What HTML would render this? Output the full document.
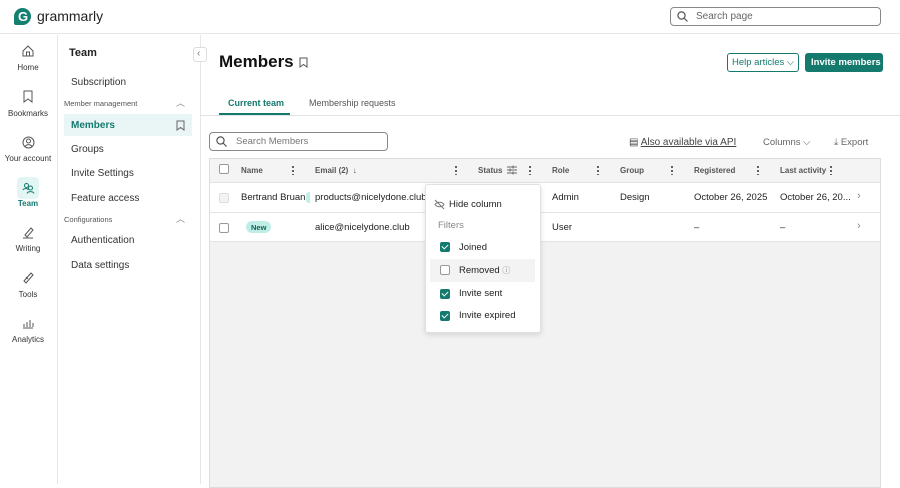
<!DOCTYPE html><html><head><style>
*{box-sizing:border-box;margin:0;padding:0}
body{width:900px;height:484px;overflow:hidden;font-family:"Liberation Sans",sans-serif;background:#fff;color:#222;position:relative}
.a{position:absolute}
.t{position:absolute;white-space:nowrap}
.nav .t{font-size:8px;color:#333;transform:translateX(-50%)}
.sb{font-size:10px;color:#333}
.h{font-size:8px;color:#555;font-weight:bold}
.cb{position:absolute;width:10px;height:10px;border:1px solid #999;border-radius:2px;background:#fff}
.ck{position:absolute;width:10px;height:10px;border-radius:2px;background:#157a6e}
.ck:after{content:"";position:absolute;left:3px;top:1px;width:3px;height:5px;border:solid #fff;border-width:0 1.5px 1.5px 0;transform:rotate(45deg)}
.dots{position:absolute;width:2px;height:10px;background:radial-gradient(circle,#555 1px,transparent 1.2px) 0 0/2px 4px repeat-y}
</style></head><body>
<div class="a" style="left:0;top:0;width:900px;height:34px;border-bottom:1px solid #e6e6e6"></div>
<div class="a" style="left:14px;top:8px;width:17px;height:17px;background:#15806f;border-radius:50% 50% 50% 2px"></div>
<div class="t" style="left:18px;top:9px;color:#fff;font-weight:bold;font-size:13px">G</div>
<div class="t" style="left:37px;top:8px;font-size:14px;color:#222">grammarly</div>
<div class="a" style="left:670px;top:7px;width:211px;height:19px;border:1px solid #888;border-radius:4px"></div>
<svg class="a" style="left:677px;top:11px" width="11" height="11"><circle cx="4.5" cy="4.5" r="3.6" fill="none" stroke="#555" stroke-width="1.2"/><path d="M7 7l3.5 3.5" stroke="#555" stroke-width="1.2"/></svg>
<div class="t" style="left:696px;top:11px;font-size:10px;color:#666">Search page</div>
<div class="a" style="left:57px;top:35px;width:1px;height:449px;background:#e6e6e6"></div>
<div class="nav">
<svg class="a" style="left:22px;top:45px" width="12" height="12"><path d="M1 6L6 1l5 5v5H1z M4.5 11V7h3v4" fill="none" stroke="#555"/></svg>
<div class="t" style="left:28px;top:63px">Home</div>
<svg class="a" style="left:23px;top:90px" width="10" height="13"><path d="M1 1h8v11L5 9 1 12z" fill="none" stroke="#555"/></svg>
<div class="t" style="left:28px;top:109px">Bookmarks</div>
<svg class="a" style="left:22px;top:136px" width="13" height="13"><circle cx="6.5" cy="6.5" r="5.5" fill="none" stroke="#555"/><circle cx="6.5" cy="5" r="2" fill="none" stroke="#555"/><path d="M3 10.5c2-2.5 5-2.5 7 0" fill="none" stroke="#555"/></svg>
<div class="t" style="left:28px;top:154px">Your account</div>
<div class="a" style="left:17px;top:177px;width:22px;height:22px;background:#e3f6f3;border-radius:4px"></div>
<svg class="a" style="left:22px;top:182px" width="13" height="12"><circle cx="4.5" cy="3.5" r="2" fill="none" stroke="#157a6e"/><circle cx="8.5" cy="6" r="2" fill="none" stroke="#157a6e"/><path d="M1 8c1-2 5-2 5 0M5 11.5c1-2.5 6-2.5 7 0" fill="none" stroke="#157a6e"/></svg>
<div class="t" style="left:28px;top:199px;color:#157a6e;font-weight:bold">Team</div>
<svg class="a" style="left:22px;top:226px" width="12" height="13"><path d="M3 9l6-7 2 2-6 7zM1 12h10" fill="none" stroke="#555"/></svg>
<div class="t" style="left:28px;top:244px">Writing</div>
<svg class="a" style="left:22px;top:271px" width="12" height="13"><path d="M2 10l7-8 2 2-7 8zM4 6l2 2" fill="none" stroke="#555"/></svg>
<div class="t" style="left:28px;top:290px">Tools</div>
<svg class="a" style="left:22px;top:317px" width="12" height="12"><path d="M1 11h10M2 10V7M5 10V5M8 10V3M11 10V6" fill="none" stroke="#555"/></svg>
<div class="t" style="left:28px;top:335px">Analytics</div>
</div>
<div class="a" style="left:200px;top:35px;width:1px;height:449px;background:#e6e6e6"></div>
<div class="a" style="left:193px;top:47px;width:14px;height:15px;border:1px solid #ddd;border-radius:3px;background:#fff"></div>
<div class="t" style="left:197px;top:48px;font-size:10px;color:#777">‹</div>
<div class="t" style="left:69px;top:47px;font-size:11px;font-weight:bold">Team</div>
<div class="t sb" style="left:71px;top:77px">Subscription</div>
<div class="t" style="left:64px;top:99px;font-size:7.5px;color:#555">Member management</div>
<div class="t" style="left:176px;top:96px;font-size:9px;color:#888">︿</div>
<div class="a" style="left:64px;top:114px;width:128px;height:22px;background:#e9f6f5"></div>
<div class="t sb" style="left:71px;top:120px;color:#157a6e;font-weight:bold">Members</div>
<svg class="a" style="left:176px;top:120px" width="9" height="11"><path d="M1 1h7v9L4.5 7.5 1 10z" fill="none" stroke="#666"/></svg>
<div class="t sb" style="left:71px;top:144px">Groups</div>
<div class="t sb" style="left:71px;top:168px">Invite Settings</div>
<div class="t sb" style="left:71px;top:193px">Feature access</div>
<div class="t" style="left:64px;top:215px;font-size:7.5px;color:#555">Configurations</div>
<div class="t" style="left:176px;top:212px;font-size:9px;color:#888">︿</div>
<div class="t sb" style="left:71px;top:235px">Authentication</div>
<div class="t sb" style="left:71px;top:260px">Data settings</div>
<div class="t" style="left:219px;top:52px;font-size:17px;font-weight:bold;color:#111">Members</div>
<svg class="a" style="left:299px;top:57px" width="9" height="11"><path d="M1 1h7v9L4.5 7.5 1 10z" fill="none" stroke="#555"/></svg>
<div class="a" style="left:727px;top:53px;width:72px;height:19px;border:1px solid #157a6e;border-radius:3px"></div>
<div class="t" style="left:732px;top:57px;font-size:9.5px;color:#157a6e">Help articles ⌵</div>
<div class="a" style="left:805px;top:53px;width:78px;height:19px;background:#157a6e;border-radius:3px"></div>
<div class="t" style="left:811px;top:57px;font-size:9.5px;color:#fff;font-weight:bold">Invite members</div>
<div class="t" style="left:228px;top:98px;font-size:9px;color:#157a6e;font-weight:bold">Current team</div>
<div class="t" style="left:309px;top:98px;font-size:9px;color:#555">Membership requests</div>
<div class="a" style="left:200px;top:115px;width:700px;height:1px;background:#e3e3e3"></div>
<div class="a" style="left:219px;top:113px;width:71px;height:2px;background:#157a6e"></div>
<div class="a" style="left:209px;top:132px;width:179px;height:19px;border:1px solid #888;border-radius:4px"></div>
<svg class="a" style="left:216px;top:136px" width="11" height="11"><circle cx="4.5" cy="4.5" r="3.6" fill="none" stroke="#555" stroke-width="1.2"/><path d="M7 7l3.5 3.5" stroke="#555" stroke-width="1.2"/></svg>
<div class="t" style="left:236px;top:136px;font-size:9.5px;color:#777">Search Members</div>
<div class="t" style="left:629px;top:137px;font-size:10px;color:#444">▤ <u>Also available via API</u></div>
<div class="t" style="left:763px;top:137px;font-size:9.5px;color:#666">Columns ⌵</div>
<div class="t" style="left:834px;top:137px;font-size:9.5px;color:#666">⤓ Export</div>
<div class="a" style="left:209px;top:158px;width:672px;height:330px;border:1px solid #ddd;background:#f2f2f2"></div>
<div class="a" style="left:210px;top:159px;width:670px;height:24px;background:#f4f4f4;border-bottom:1px solid #e2e2e2"></div>
<div class="a" style="left:210px;top:183px;width:670px;height:58px;background:#fff"></div>
<div class="a" style="left:210px;top:212px;width:670px;height:1px;background:#e4e4e4"></div>
<div class="a" style="left:210px;top:241px;width:670px;height:1px;background:#e4e4e4"></div>
<div class="cb" style="left:219px;top:164px"></div>
<div class="t h" style="left:241px;top:166px">Name</div><div class="dots" style="left:292px;top:165px"></div>
<div class="t h" style="left:315px;top:166px">Email (2) &nbsp;↓</div><div class="dots" style="left:455px;top:165px"></div>
<div class="t h" style="left:478px;top:166px">Status</div>
<svg class="a" style="left:507px;top:165px" width="10" height="10"><path d="M0 2h10M0 5h10M0 8h10" stroke="#666"/><path d="M6 0.5v3M3 3.5v3M6 6.5v3" stroke="#666"/></svg>
<div class="dots" style="left:529px;top:165px"></div>
<div class="t h" style="left:552px;top:166px">Role</div><div class="dots" style="left:597px;top:165px"></div>
<div class="t h" style="left:620px;top:166px">Group</div><div class="dots" style="left:671px;top:165px"></div>
<div class="t h" style="left:694px;top:166px">Registered</div><div class="dots" style="left:757px;top:165px"></div>
<div class="t h" style="left:780px;top:166px">Last activity</div><div class="dots" style="left:830px;top:165px"></div>
<div class="cb" style="left:219px;top:193px;border-color:#ddd;background:#f4f4f4"></div>
<div class="t" style="left:241px;top:192px;font-size:9.5px">Bertrand Bruan</div>
<div class="a" style="left:306px;top:192px;width:4px;height:11px;background:#bfeee6;border-radius:3px 0 0 3px"></div>
<div class="t" style="left:315px;top:192px;font-size:9.5px">products@nicelydone.club</div>
<div class="t" style="left:552px;top:192px;font-size:9.5px">Admin</div>
<div class="t" style="left:620px;top:192px;font-size:9.5px">Design</div>
<div class="t" style="left:694px;top:192px;font-size:9.5px">October 26, 2025</div>
<div class="t" style="left:780px;top:192px;font-size:9.5px">October 26, 20...</div>
<div class="t" style="left:857px;top:190px;font-size:11px;color:#888">›</div>
<div class="cb" style="left:219px;top:223px"></div>
<div class="a" style="left:246px;top:221px;width:25px;height:12px;background:#bfeee6;border-radius:6px"></div>
<div class="t" style="left:251px;top:223px;font-size:7.5px;font-weight:bold;color:#135f55">New</div>
<div class="t" style="left:315px;top:222px;font-size:9.5px">alice@nicelydone.club</div>
<div class="t" style="left:552px;top:222px;font-size:9.5px">User</div>
<div class="t" style="left:694px;top:222px;font-size:9.5px">–</div>
<div class="t" style="left:780px;top:222px;font-size:9.5px">–</div>
<div class="t" style="left:857px;top:220px;font-size:11px;color:#888">›</div>
<div class="a" style="left:425px;top:184px;width:116px;height:149px;background:#fff;border:1px solid #e0e0e0;border-radius:3px;box-shadow:0 2px 6px rgba(0,0,0,.12)"></div>
<svg class="a" style="left:434px;top:199px" width="11" height="11"><path d="M1 5.5c2-3 7-3 9 0c-2 3-7 3-9 0zM1 1l9 9" fill="none" stroke="#777"/></svg>
<div class="t" style="left:449px;top:199px;font-size:9.5px">Hide column</div>
<div class="t" style="left:438px;top:220px;font-size:9.5px;color:#888">Filters</div>
<div class="ck" style="left:440px;top:242px"></div><div class="t" style="left:459px;top:242px;font-size:9.5px">Joined</div>
<div class="a" style="left:430px;top:259px;width:105px;height:23px;background:#f3f3f3"></div>
<div class="cb" style="left:440px;top:265px"></div><div class="t" style="left:459px;top:265px;font-size:9.5px">Removed <span style="font-size:8px;color:#888">ⓘ</span></div>
<div class="ck" style="left:440px;top:289px"></div><div class="t" style="left:459px;top:288px;font-size:9.5px">Invite sent</div>
<div class="ck" style="left:440px;top:311px"></div><div class="t" style="left:459px;top:310px;font-size:9.5px">Invite expired</div>
</body></html>
